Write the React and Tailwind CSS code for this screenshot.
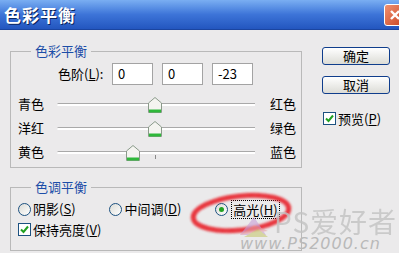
import React from 'react';

const CJK = { fontFamily: '"Noto Sans CJK SC", "Liberation Sans", sans-serif' };

// slider thumb, house shaped with a green foot
function Thumb({ left }) {
  return (
    <svg className="absolute top-[-7px]" style={{ left: left - 7 }} width="14" height="16" viewBox="0 0 14 16">
      <path d="M7 0.5 L13.5 6 L13.5 15.5 L0.5 15.5 L0.5 6 Z" fill="#f4f4f0" stroke="#8a9a8a" />
      <rect x="1" y="12.5" width="12" height="3" fill="#2fb83a" />
    </svg>
  );
}

function SliderRow({ left, right, pos, tick }) {
  return (
    <div className="flex items-center h-[24px]">
      <span className="w-[39px] text-[13px] text-black">{left}</span>
      <div className="relative w-[198px] h-[3px] border-t border-[#a9a9a9] bg-white rounded-l-sm">
        {tick && <div className="absolute left-[98px] top-[3px] w-px h-[4px] bg-[#8a8a8a]" />}
        <Thumb left={pos} />
      </div>
      <span className="ml-[15px] text-[13px] text-black">{right}</span>
    </div>
  );
}

function Field({ value }) {
  return (
    <div className="w-[41px] h-[22px] border border-[#a3a3a3] bg-white px-[5px] text-[13px] leading-[20px] text-black">
      {value}
    </div>
  );
}

function Check({ label, hot }) {
  return (
    <div className="flex items-center">
      <div className="w-[13px] h-[13px] border border-[#1c5180] bg-white flex items-center justify-center">
        <svg width="9" height="9" viewBox="0 0 9 9">
          <path d="M1 4.5 L3.5 7 L8 1.5" fill="none" stroke="#21a121" strokeWidth="2" />
        </svg>
      </div>
      <span className="ml-[2px] text-[13px] text-black">
        {label}(<span className="underline">{hot}</span>)
      </span>
    </div>
  );
}

function Radio({ checked }) {
  return (
    <div className="w-[13px] h-[13px] rounded-full border border-[#1c5180] bg-gradient-to-br from-[#dcdcd6] to-white flex items-center justify-center">
      {checked && <div className="w-[5px] h-[5px] rounded-full bg-[#21a121]" />}
    </div>
  );
}

function Button({ children }) {
  return (
    <div className="w-[68px] h-[18px] rounded-[3px] border border-[#0f3d8c] bg-gradient-to-b from-white to-[#dcdcd6] flex items-center justify-center text-[13px] text-black">
      {children}
    </div>
  );
}

export default function App() {
  return (
    <div className="relative w-[399px] h-[253px] overflow-hidden bg-[#ebeaeb]" style={CJK}>
      {/* title bar */}
      <div className="h-[30px] flex items-center justify-between pl-[4px] bg-gradient-to-b from-[#7aaef2] via-[#3d74d8] to-[#2356bf] border-b border-[#1b45a0]">
        <span className="text-[17px] font-bold text-white tracking-[1px] [text-shadow:1px_1px_0_#0a2660]">色彩平衡</span>
        <div className="w-[22px] h-[22px] -mr-[7px] rounded-[3px] border border-white bg-gradient-to-br from-[#f09070] to-[#c8421c] flex items-center justify-center">
          <svg width="12" height="12" viewBox="0 0 12 12">
            <path d="M2 2 L10 10 M10 2 L2 10" stroke="white" strokeWidth="2.4" />
          </svg>
        </div>
      </div>

      <div className="flex pl-[10px]">
        {/* left column */}
        <div className="w-[292px]">
          <fieldset className="mt-[13px] border border-[#b9b9b9] pl-[7px] pb-[3px]">
            <legend className="ml-[13px] px-[4px] text-[13px] leading-[16px] text-[#1c4ea8]">色彩平衡</legend>
            <div className="flex items-center mt-[4px]">
              <span className="ml-[40px] w-[54px] text-[13px] text-black">
                色阶(<span className="underline">L</span>):
              </span>
              <div className="flex gap-[9px]">
                <Field value="0" />
                <Field value="0" />
                <Field value="-23" />
              </div>
            </div>
            <div className="mt-[7px]">
              <SliderRow left="青色" right="红色" pos={98} />
              <SliderRow left="洋红" right="绿色" pos={98} />
              <SliderRow left="黄色" right="蓝色" pos={76} tick />
            </div>
          </fieldset>

          <fieldset className="mt-[11px] border border-[#b9b9b9] pl-[7px] pb-[10px]">
            <legend className="ml-[13px] px-[4px] text-[13px] leading-[16px] text-[#1c4ea8]">色调平衡</legend>
            <div className="flex items-center h-[22px] mt-[3px]">
              <Radio />
              <span className="ml-[2px] text-[13px] text-black">阴影(<span className="underline">S</span>)</span>
              <div className="ml-[33px]"><Radio /></div>
              <span className="ml-[3px] text-[13px] text-black">中间调(<span className="underline">D</span>)</span>
              <div className="ml-[34px]"><Radio checked /></div>
              <span className="ml-[3px] px-[1px] border border-dotted border-black text-[13px] leading-[17px] text-black">
                高光(<span className="underline">H</span>)
              </span>
            </div>
            <Check label="保持亮度" hot="V" />
          </fieldset>
        </div>

        {/* right column */}
        <div className="ml-[20px] pt-[17px] flex flex-col">
          <Button>确定</Button>
          <div className="mt-[11px]"><Button>取消</Button></div>
          <div className="mt-[15px] ml-[1px]"><Check label="预览" hot="P" /></div>
        </div>
      </div>

      {/* red marker ellipse */}
      <svg className="absolute left-[185px] top-[186px]" width="115" height="56" viewBox="0 0 115 56">
        <defs>
          <filter id="soft"><feGaussianBlur stdDeviation="1.2" /></filter>
        </defs>
        <ellipse cx="56" cy="27" rx="48" ry="17" transform="rotate(-6 56 27)" fill="none" stroke="#e8202a" strokeWidth="5" filter="url(#soft)" opacity="0.9" />
      </svg>

      {/* watermark */}
      <svg className="absolute left-[238px] top-[213px] opacity-60" width="32" height="26" viewBox="0 0 32 26">
        <path d="M2 22 L16 4 L28 22 Z" fill="#c9a0d8" />
        <path d="M2 22 L16 12 L30 18 Z" fill="#e7a0a8" />
        <path d="M6 24 L20 16 L30 24 Z" fill="#c8c870" />
      </svg>
      <div className="absolute left-[274px] top-[204px] whitespace-nowrap text-[28px] leading-[34px] text-[#c3c3c3] opacity-80 tracking-[1px]">PS爱好者</div>
      <div className="absolute left-[240px] top-[234px] whitespace-nowrap text-[16px] leading-[19px] italic text-[#b9b9b9] tracking-[1px]" style={{ fontFamily: '"DejaVu Sans", sans-serif' }}>
        www.PS2000.cn
      </div>
    </div>
  );
}
